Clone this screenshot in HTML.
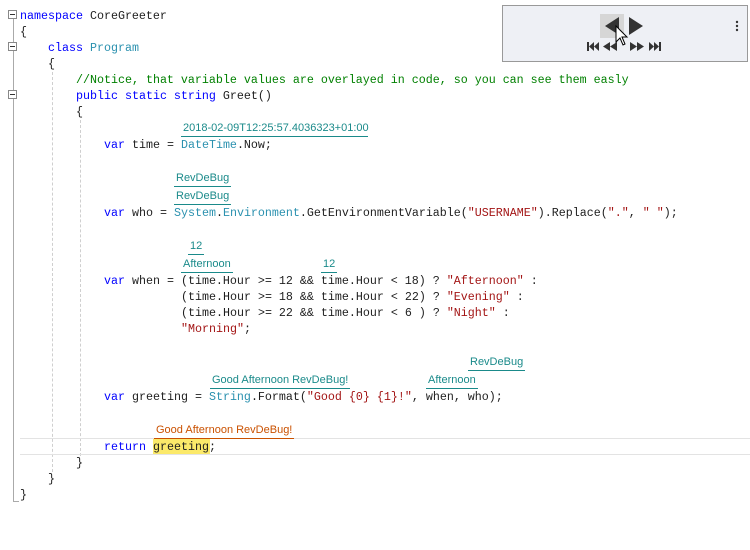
<!DOCTYPE html>
<html><head><style>
body{margin:0;width:750px;height:550px;background:#fff;position:relative;overflow:hidden;font-family:"Liberation Mono",monospace}
.l{position:absolute;font-size:11.67px;line-height:16px;white-space:pre;color:#1e1e1e}
.k{color:#0000ff}.t{color:#2b91af}.s{color:#a31515}.c{color:#008000}
.a{position:absolute;font-family:"Liberation Sans",sans-serif;font-size:11px;line-height:14px;color:#1a8a8a;border-bottom:1px solid #1a8a8a;padding:0 2px 1px;white-space:nowrap}
.o{color:#ca5100;border-color:#ca5100}
.g{position:absolute;width:0;border-left:1px dashed #cfcfcf}
.f{position:absolute;left:8px;width:7px;height:7px;border:1px solid #888;background:#fff}
.f:after{content:"";position:absolute;left:1px;top:3px;width:5px;height:1px;background:#333}
</style></head><body>
<div style="position:absolute;left:13px;top:16px;height:486px;border-left:1px solid #aaa"></div>
<div style="position:absolute;left:13px;top:501px;width:6px;border-top:1px solid #aaa"></div>
<div class="f" style="top:10px"></div><div class="f" style="top:42px"></div><div class="f" style="top:90px"></div>
<div class="g" style="left:52px;top:72px;height:400px"></div>
<div class="g" style="left:80px;top:120px;height:336px"></div>
<div style="position:absolute;left:20px;top:438px;width:730px;height:15px;border-top:1px solid #e3e3e3;border-bottom:1px solid #e3e3e3"></div>
<div style="position:absolute;left:153px;top:439px;width:57px;height:15px;background:#fbe96a"></div>

<div class="l" style="left:20px;top:8px"><span class="k">namespace</span> CoreGreeter</div>
<div class="l" style="left:20px;top:24px">{</div>
<div class="l" style="left:48px;top:40px"><span class="k">class</span> <span class="t">Program</span></div>
<div class="l" style="left:48px;top:56px">{</div>
<div class="l" style="left:76px;top:72px"><span class="c">//Notice, that variable values are overlayed in code, so you can see them easly</span></div>
<div class="l" style="left:76px;top:88px"><span class="k">public static string</span> Greet()</div>
<div class="l" style="left:76px;top:104px">{</div>
<div class="l" style="left:104px;top:137px"><span class="k">var</span> time = <span class="t">DateTime</span>.Now;</div>
<div class="l" style="left:104px;top:205px"><span class="k">var</span> who = <span class="t">System</span>.<span class="t">Environment</span>.GetEnvironmentVariable(<span class="s">"USERNAME"</span>).Replace(<span class="s">"."</span>, <span class="s">" "</span>);</div>
<div class="l" style="left:104px;top:273px"><span class="k">var</span> when = (time.Hour &gt;= 12 &amp;&amp; time.Hour &lt; 18) ? <span class="s">"Afternoon"</span> :</div>
<div class="l" style="left:181px;top:289px">(time.Hour &gt;= 18 &amp;&amp; time.Hour &lt; 22) ? <span class="s">"Evening"</span> :</div>
<div class="l" style="left:181px;top:305px">(time.Hour &gt;= 22 &amp;&amp; time.Hour &lt; 6 ) ? <span class="s">"Night"</span> :</div>
<div class="l" style="left:181px;top:321px"><span class="s">"Morning"</span>;</div>
<div class="l" style="left:104px;top:389px"><span class="k">var</span> greeting = <span class="t">String</span>.Format(<span class="s">"Good {0} {1}!"</span>, when, who);</div>
<div class="l" style="left:104px;top:439px"><span class="k">return</span> greeting;</div>
<div class="l" style="left:76px;top:455px">}</div>
<div class="l" style="left:48px;top:471px">}</div>
<div class="l" style="left:20px;top:487px">}</div>

<div class="a" style="left:181px;top:121px;width:183px">2018-02-09T12:25:57.4036323+01:00</div>
<div class="a" style="left:174px;top:171px">RevDeBug</div>
<div class="a" style="left:174px;top:189px">RevDeBug</div>
<div class="a" style="left:188px;top:239px">12</div>
<div class="a" style="left:181px;top:257px">Afternoon</div>
<div class="a" style="left:321px;top:257px">12</div>
<div class="a" style="left:468px;top:355px">RevDeBug</div>
<div class="a" style="left:210px;top:373px">Good Afternoon RevDeBug!</div>
<div class="a" style="left:426px;top:373px">Afternoon</div>
<div class="a o" style="left:154px;top:423px">Good Afternoon RevDeBug!</div>

<div style="position:absolute;left:502px;top:5px;width:244px;height:55px;background:#eef0f5;border:1px solid #999"></div>
<div style="position:absolute;left:600px;top:14px;width:24px;height:24px;background:#d6d6d6"></div>
<svg style="position:absolute;left:0;top:0" width="750" height="62">
<path d="M605 26 L619 17 L619 35 Z" fill="#333"/>
<path d="M629 17 L643 26 L629 35 Z" fill="#333"/>
<g fill="#333">
<rect x="587" y="42" width="2" height="9"/><path d="M589 46.5 L594 42 L594 51Z M594 46.5 L599 42 L599 51Z"/>
<path d="M603 46.5 L610 42 L610 51Z M610 46.5 L617 42 L617 51Z"/>
<path d="M630 42 L637 46.5 L630 51Z M637 42 L644 46.5 L637 51Z"/>
<path d="M649 42 L654 46.5 L649 51Z M654 42 L659 46.5 L654 51Z"/><rect x="659" y="42" width="2" height="9"/>
<circle cx="737" cy="22" r="1.2"/><circle cx="737" cy="26" r="1.2"/><circle cx="737" cy="30" r="1.2"/>
</g>
<path d="M616 26 L616 42 L620 38 L623 45 L625 44 L622 37 L627 37 Z" fill="#fff" stroke="#000" stroke-width="1"/>
</svg>
</body></html>
